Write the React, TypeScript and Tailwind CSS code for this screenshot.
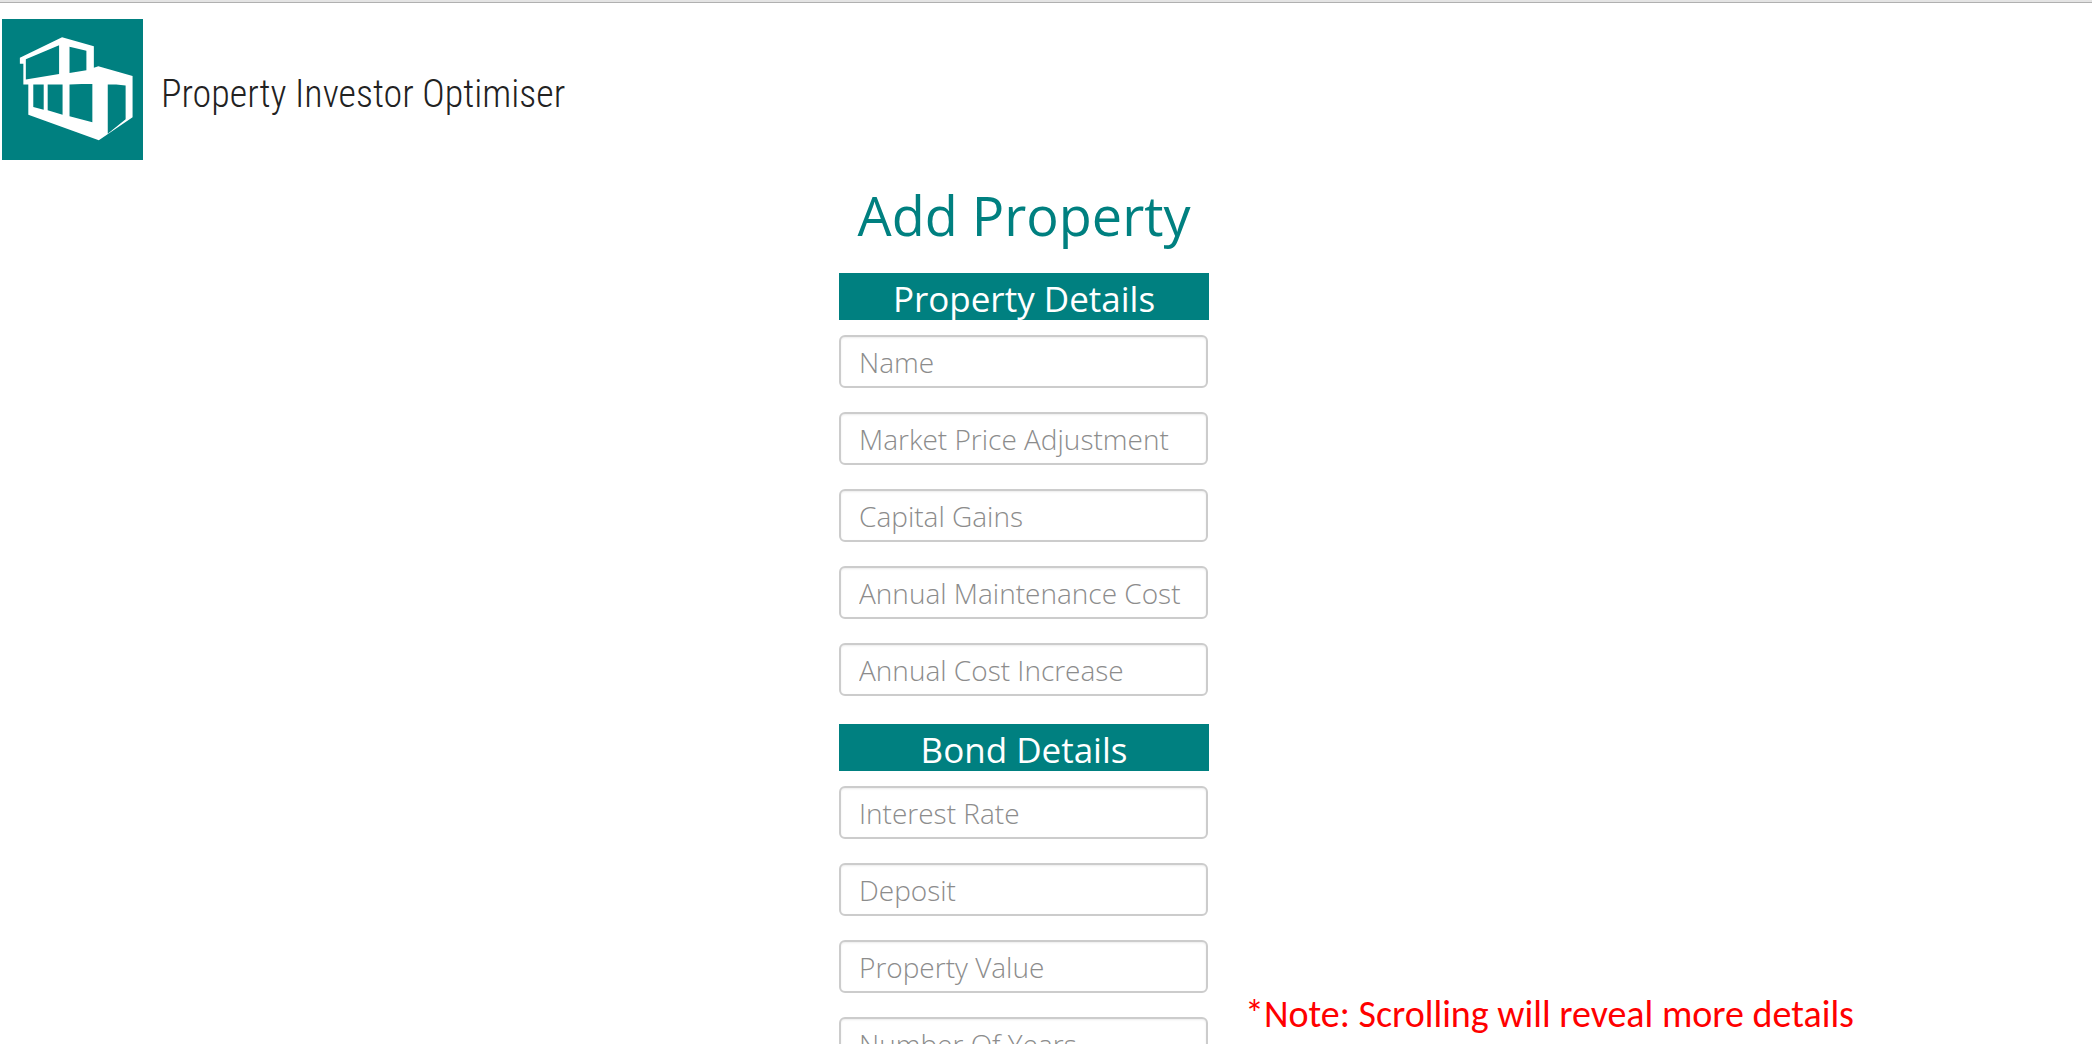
const propertyFields = ["Name", "Market Price Adjustment", "Capital Gains", "Annual Maintenance Cost", "Annual Cost Increase"];
const bondFields = ["Interest Rate", "Deposit", "Property Value", "Number Of Years"];

function Logo() {
  return (
    <svg viewBox="0 0 142 142" className="size-[141px] shrink-0" role="img" aria-label="House">
      <rect width="142" height="142" fill="#008080" />
      <path
        fill="#fff"
        fillRule="evenodd"
        d="M60.500 18.500 92.500 27.500V49L97 47.500 131.500 57.500V99L97.500 122 26.500 96.500V66H21.500V45H18V39ZM24 40.500V61L57.500 55.500V26.500ZM68 28V54.500L85 51.500V32ZM31.500 66V88.500L42 91.500V66ZM46 66V92L61 96.500V66ZM68 66V98L91 104V65.500H80ZM106.500 66V115.500L124.500 101V67L115 66Z"
      />
    </svg>
  );
}

function Section({ title, fields }: { title: string; fields: string[] }) {
  return (
    <section className="flex flex-col gap-[15px]">
      <h2 className="h-[47px] bg-[#008080] text-center text-[35px] leading-[51px] text-white">{title}</h2>
      <div className="flex flex-col gap-6 pr-px">
        {fields.map((field) => (
          <input
            key={field}
            type="text"
            aria-label={field}
            placeholder={field}
            className="h-[53px] w-full rounded-md border-2 border-[#ccc] bg-white px-[18px] text-[28px] font-light text-[#555] shadow-[inset_0_1px_2px_rgba(0,0,0,0.08)] placeholder:text-[#8c8c8c]"
          />
        ))}
      </div>
    </section>
  );
}

export default function App() {
  return (
    <div className="flex h-screen flex-col bg-white pb-4 font-['Open_Sans',sans-serif]">
      <header className="border-t-2 border-[#e4e4e4]">
        <div className="h-px bg-[#b0b0b0]" />
        <div className="flex items-center gap-[18px] pt-4 pl-0.5">
          <Logo />
          <p className="pt-2.5 font-['Roboto_Condensed',sans-serif] text-[38px] font-light text-[#222]">Property Investor Optimiser</p>
        </div>
      </header>
      <main className="grid min-h-0 flex-1 grid-cols-[1fr_370px_1fr] grid-rows-[minmax(0,1fr)] pr-11">
        <form className="col-start-2 flex flex-col gap-[28px] overflow-y-auto pt-5 [scrollbar-width:none]">
          <div className="flex flex-col gap-[23px]">
            <h1 className="text-center text-[54px] leading-[70px] text-[#008080]">Add Property</h1>
            <Section title="Property Details" fields={propertyFields} />
          </div>
          <Section title="Bond Details" fields={bondFields} />
        </form>
        <p className="ml-9 self-end font-['Carlito','Lato',sans-serif] text-[38px] leading-[60px] whitespace-nowrap text-[#f00]">
          *Note: Scrolling will reveal more details
        </p>
      </main>
    </div>
  );
}
